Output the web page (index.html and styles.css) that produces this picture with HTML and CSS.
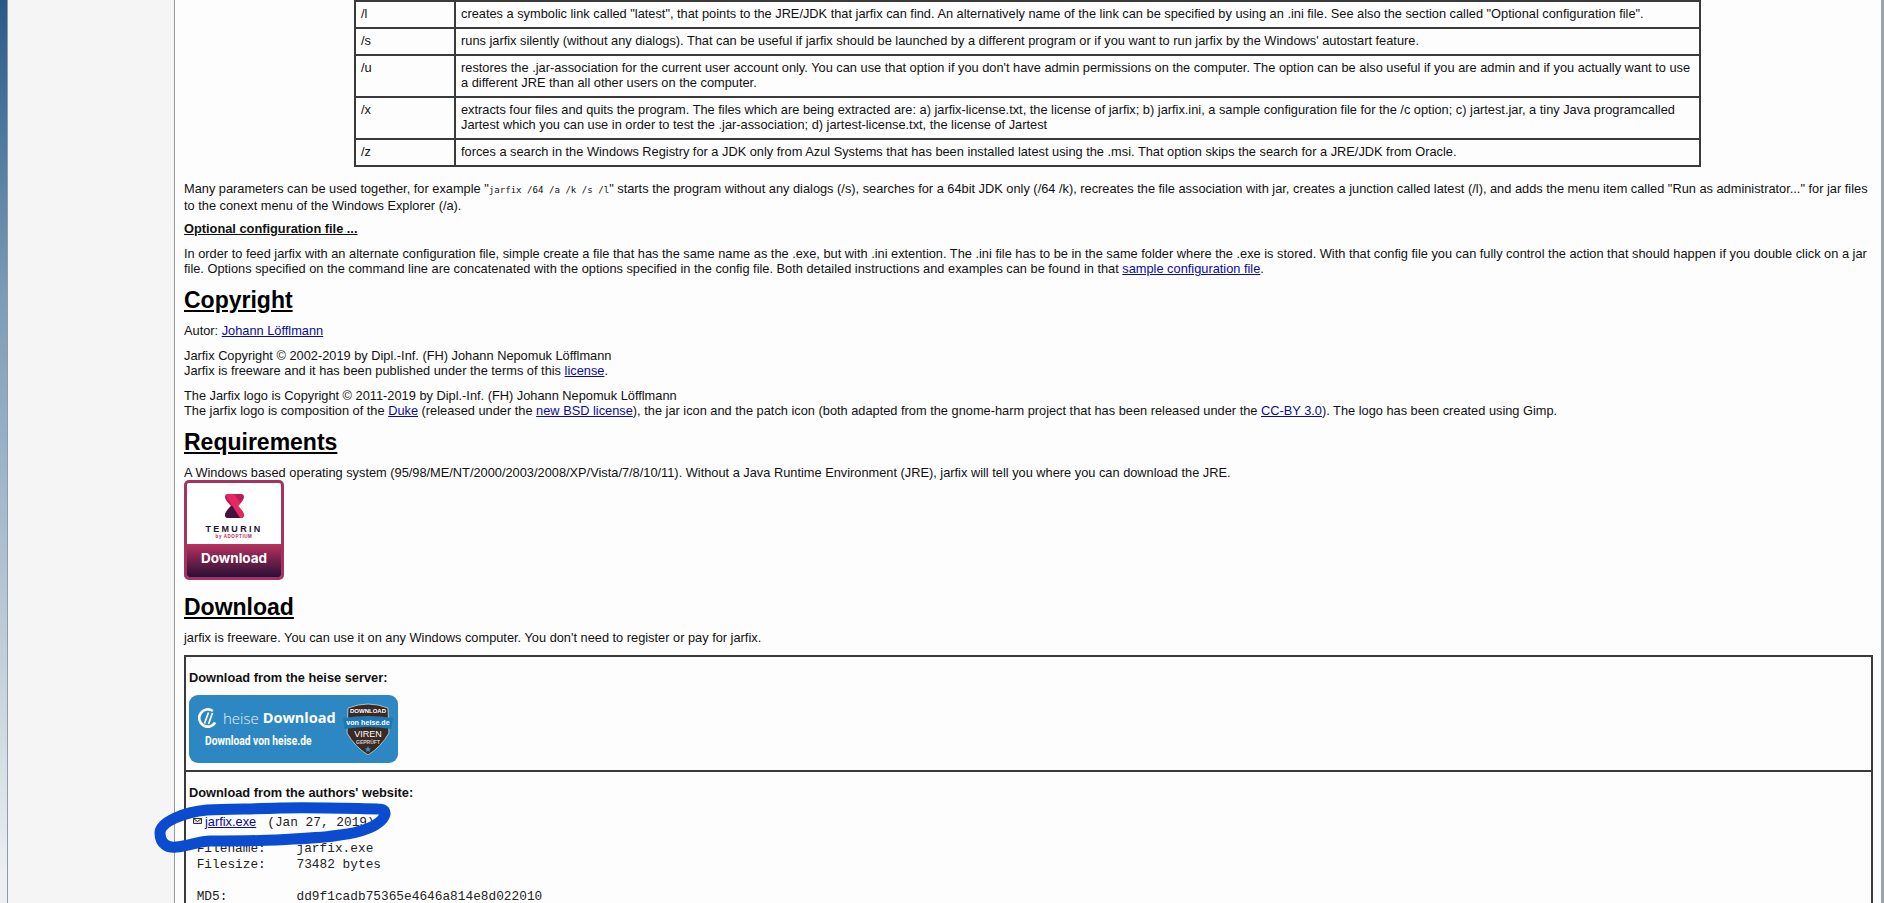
FILE: index.html
```html
<!DOCTYPE html>
<html lang="en">
<head>
    <meta charset="UTF-8">
    <title>Jarfix</title>
    <link rel="stylesheet" href="styles.css">
</head>
<body>
    <div class="strip"></div>
    <div class="sidebar"></div>
    <div class="content">
        <table class="options">
            <tr><td class="opt">/l</td><td>creates a symbolic link called "latest", that points to the JRE/JDK that jarfix can find. An alternatively name of the link can be specified by using an .ini file. See also the section called "Optional configuration file".</td></tr>
            <tr><td class="opt">/s</td><td>runs jarfix silently (without any dialogs). That can be useful if jarfix should be launched by a different program or if you want to run jarfix by the Windows' autostart feature.</td></tr>
            <tr><td class="opt">/u</td><td>restores the .jar-association for the current user account only. You can use that option if you don't have admin permissions on the computer. The option can be also useful if you are admin and if you actually want to use a different JRE than all other users on the computer.</td></tr>
            <tr><td class="opt">/x</td><td>extracts four files and quits the program. The files which are being extracted are: a) jarfix-license.txt, the license of jarfix; b) jarfix.ini, a sample configuration file for the /c option; c) jartest.jar, a tiny Java programcalled Jartest which you can use in order to test the .jar-association; d) jartest-license.txt, the license of Jartest</td></tr>
            <tr><td class="opt">/z</td><td>forces a search in the Windows Registry for a JDK only from Azul Systems that has been installed latest using the .msi. That option skips the search for a JRE/JDK from Oracle.</td></tr>
        </table>

        <p class="lead">Many parameters can be used together, for example "<code>jarfix /64 /a /k /s /l</code>" starts the program without any dialogs (/s), searches for a 64bit JDK only (/64 /k), recreates the file association with jar, creates a junction called latest (/l), and adds the menu item called "Run as administrator..." for jar files to the conext menu of the Windows Explorer (/a).</p>
        <p class="subhead">Optional configuration file ...</p>
        <p>In order to feed jarfix with an alternate configuration file, simple create a file that has the same name as the .exe, but with .ini extention. The .ini file has to be in the same folder where the .exe is stored. With that config file you can fully control the action that should happen if you double click on a jar file. Options specified on the command line are concatenated with the options specified in the config file. Both detailed instructions and examples can be found in that <a href="#">sample configuration file</a>.</p>

        <h1>Copyright</h1>
        <p>Autor: <a href="#">Johann Löfflmann</a></p>
        <p>Jarfix Copyright © 2002-2019 by Dipl.-Inf. (FH) Johann Nepomuk Löfflmann<br>Jarfix is freeware and it has been published under the terms of this <a href="#">license</a>.</p>
        <p>The Jarfix logo is Copyright © 2011-2019 by Dipl.-Inf. (FH) Johann Nepomuk Löfflmann<br>The jarfix logo is composition of the <a href="#">Duke</a> (released under the <a href="#">new BSD license</a>), the jar icon and the patch icon (both adapted from the gnome-harm project that has been released under the <a href="#">CC-BY 3.0</a>). The logo has been created using Gimp.</p>

        <h1>Requirements</h1>
        <p class="tight">A Windows based operating system (95/98/ME/NT/2000/2003/2008/XP/Vista/7/8/10/11). Without a Java Runtime Environment (JRE), jarfix will tell you where you can download the JRE.</p>
        <div class="temurin">
            <div class="temurin-top">
                <svg width="19" height="24" viewBox="0 0 19 24">
                    <clipPath id="glass"><path d="M3 0H16Q19 0 19 3Q19 6 13 12Q19 18 19 21Q19 24 16 24H3Q0 24 0 21Q0 18 6 12Q0 6 0 3Q0 0 3 0Z"/></clipPath>
                    <g clip-path="url(#glass)">
                        <rect width="19" height="24" fill="#b81d58"/>
                        <path d="M0 24V12H8L17 24Z" fill="#45123f"/>
                        <path d="M0 0H9L19 14V24H15Z" fill="#e8265f"/>
                    </g>
                </svg>
                <div class="temurin-name">TEMURIN</div>
                <div class="temurin-by">by ADOPTIUM</div>
            </div>
            <div class="temurin-btn">Download</div>
        </div>

        <h1>Download</h1>
        <p>jarfix is freeware. You can use it on any Windows computer. You don't need to register or pay for jarfix.</p>

        <table class="downloads">
            <tr><td>
                <p class="label">Download from the heise server:</p>
                <div class="heise">
                    <div class="heise-left">
                        <div class="heise-title">
                            <svg width="20" height="20" viewBox="0 0 20 20"><path d="M14.8 3A8.6 8.6 0 1 0 17.2 14.5" fill="none" stroke="#fff" stroke-width="2.6"/><path d="M10.5 4.5L6.5 15.5M14.5 5L10.5 16" stroke="#fff" stroke-width="1.7"/></svg>
                            <span class="heise-word">heise</span><b class="heise-bold">Download</b>
                        </div>
                        <div class="heise-sub">Download von heise.de</div>
                    </div>
                    <svg class="heise-seal" width="50" height="52" viewBox="0 0 50 52">
                        <path d="M5 5Q25 -3 45 5L46 30Q38 44 25 52Q12 44 4 30Z" fill="#3a2a22" stroke="#a9c1cf" stroke-width="1"/>
                        <path d="M0 15Q25 11 50 15L48 26Q25 22 2 26Z" fill="#1f78b4"/>
                        <text x="25" y="9.5" class="seal-top">DOWNLOAD</text>
                        <text x="25" y="22" class="seal-mid">von heise.de</text>
                        <text x="25" y="34" class="seal-big">VIREN</text>
                        <text x="25" y="41" class="seal-small">GEPRÜFT</text>
                        <path d="M25 43L26 45.5L28 45.5L26.4 47L27 49L25 47.8L23 49L23.6 47L22 45.5L24 45.5Z" fill="#3f97d0"/>
                    </svg>
                </div>
            </td></tr>
            <tr><td>
                <p class="label">Download from the authors' website:</p>
                <div class="file-head"><svg class="mail" width="9" height="6" viewBox="0 0 9 6"><path d="M.5.5H8.5V5.5H.5ZM.5.5L4.5 3.5L8.5.5" fill="#ddd" stroke="#333" stroke-width="1"/></svg><a href="#">jarfix.exe</a><span class="file-date">(Jan 27, 2019)</span></div>
                <pre class="file"> Filename:    jarfix.exe
 Filesize:    73482 bytes

 MD5:         dd9f1cadb75365e4646a814e8d022010</pre>
            </td></tr>
        </table>
    </div>

    <svg class="scribble" width="420" height="70" viewBox="0 0 420 70">
        <path d="M224 9C180 8 150 7 126 8C100 9 75 9 53 10C30 12 6 22 6 33C6 45 15 48 22 47C35 46 45 41 56 41C85 41 115 41 139 39C160 38 175 37 186 35C205 33 228 26 231 14C231 10 228 9 224 9Z" fill="none" stroke="#0a4bd0" stroke-width="11" stroke-linecap="round" stroke-linejoin="round"/>
    </svg>
</body>
</html>
```

FILE: styles.css
```css
html, body { margin: 0; height: 903px; overflow: hidden; }
body { position: relative; display: flex; background: #f5f5f6; font-family: "Liberation Sans", Arial, sans-serif; font-size: 12.8px; line-height: 15px; color: #111; }
a { color: #0a0a9c; text-decoration: underline; }
.strip { width: 7px; flex: none; border-right: 1px solid #8d9bab; background: linear-gradient(#285a88, #7d9cb7 300px, #eceef1 873px); }
.sidebar { width: 166px; flex: none; }
.content { flex: 1; min-width: 0; background: #fdfdfd; border-left: 1px solid #999; border-right: 3px solid #9aa3ad; padding: 0 8px 0 9px; }
p { margin: 10px 0; }
p.tight { margin-bottom: 0; }
p.lead { margin-bottom: 8px; }
.options { width: 1347px; margin: 0 0 14px 170px; border-collapse: collapse; border: 2px solid #3a3a3a; }
.options td { border: 2px solid #3a3a3a; padding: 4px 4px 6px 5px; vertical-align: top; }
.options .opt { width: 89px; }
code { font-family: "DejaVu Sans Mono", monospace; font-size: 9.1px; }
.subhead { margin-top: 8px; font-weight: bold; text-decoration: underline; }
h1 { margin: 11px 0 10px; font-size: 23px; line-height: 26px; text-decoration: underline; color: #000; }

.temurin { width: 100px; height: 100px; margin-bottom: 14px; box-sizing: border-box; border: 3px solid #a8325f; border-radius: 5px; overflow: hidden; display: flex; flex-direction: column; background: #fff; }
.temurin + h1 { margin-top: 0; }
.temurin-top { flex: 1; display: flex; flex-direction: column; align-items: center; padding-top: 11px; }
.temurin-name { margin-top: 6px; font-size: 9px; line-height: 10px; font-weight: bold; letter-spacing: 2.3px; color: #1c1530; }
.temurin-by { font-size: 4.5px; line-height: 6px; letter-spacing: .6px; color: #b81d58; font-weight: bold; }
.temurin-btn { height: 33px; text-align: center; color: #fff; font-family: "Inter", sans-serif; font-weight: bold; font-size: 13.5px; line-height: 28px; background: linear-gradient(#b8325f, #2a0f35); }

.downloads { width: 100%; border-collapse: collapse; border: 2px solid #3a3a3a; }
.downloads td { border: 2px solid #3a3a3a; padding: 3px; }
.downloads .label { margin: 10px 0; font-weight: bold; }
.heise { width: 209px; height: 68px; margin-bottom: 4px; box-sizing: border-box; padding: 13px 5px 0 9px; display: flex; justify-content: space-between; background: #2d87c3; border-radius: 9px; color: #fff; }
.heise-seal { margin-top: -5px; }
.heise-title { display: flex; align-items: center; gap: 5px; font-family: "Open Sans", sans-serif; font-size: 15px; line-height: 20px; }
.heise-word { font-weight: 300; color: #e3f0f8; }
.heise-bold { font-size: 14.5px; margin-left: -1px; }
.heise-sub { margin: 6px 0 0 7px; font-family: "Roboto", sans-serif; font-weight: bold; font-size: 13px; line-height: 14px; white-space: nowrap; transform: scaleX(.79); transform-origin: left; }
.heise-seal text { text-anchor: middle; fill: #fff; font-family: "Liberation Sans", sans-serif; }
.seal-top { font-size: 6px; font-weight: bold; }
.seal-small { font-size: 5px; font-weight: bold; opacity: .75; }
.seal-mid { font-size: 7.2px; font-weight: bold; }
.seal-big { font-size: 9px; }
.file-head { margin-top: 14px; font-size: 12.8px; line-height: 16px; }
.file-date { margin-left: 11px; font-family: "Liberation Mono", monospace; color: #222; }
.file { margin: 10px 0 0; font-family: "Liberation Mono", monospace; font-size: 12.8px; line-height: 16px; color: #222; }
.mail { margin: 0 3px 2px 4px; }
.scribble { position: absolute; left: 154px; top: 800px; }
```
